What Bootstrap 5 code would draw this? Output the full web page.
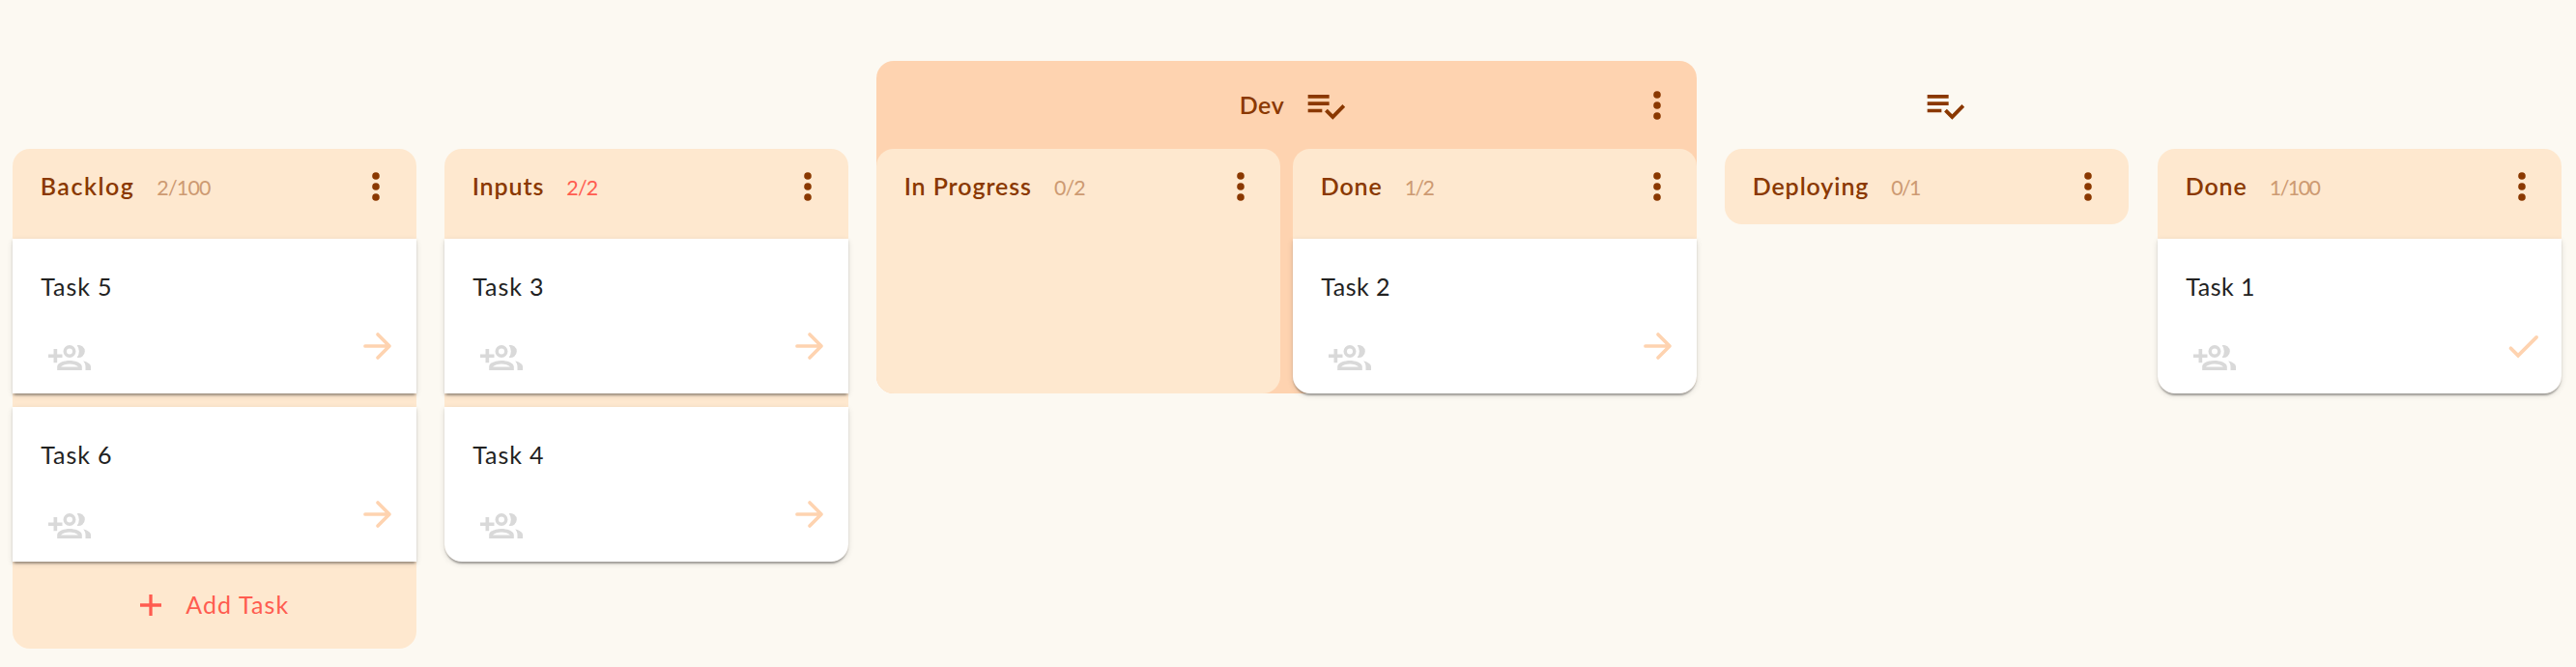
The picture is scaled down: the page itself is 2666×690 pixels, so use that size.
<!DOCTYPE html>
<html lang="en">
<head>
<meta charset="utf-8">
<meta name="viewport" content="width=device-width, initial-scale=1">
<title>Board</title>
<link href="https://cdn.jsdelivr.net/npm/bootstrap@5.3.0/dist/css/bootstrap.min.css" rel="stylesheet">
<style>
body{background:#fcf9f2;font-family:Lato,sans-serif;color:#222;height:690px;overflow:hidden}
svg{display:block;flex:none}
.board{padding:63px 0 0 13px;gap:29px}
.lane{width:418px;flex:none}
.lane-last{margin-left:1px}
.stage-head{height:91px;color:#8a3800;font-size:25px;line-height:30px;font-weight:600;letter-spacing:.6px;gap:21px}
.stage-head.titled{padding-left:14px}
.stage-head.untitled{padding-left:37px}
.stage-head>span,.pane-head>div{margin-top:-1px}
.stage-menu{right:19px;top:24px}
.stage-body{gap:13px}
.stage-dev{width:849px;flex:none;background:#fed3b0;border-radius:18px}
.pane{background:#fee8cf;border-radius:18px}
.pane-head{height:78px;padding:0 20px 0 28.700px;color:#8a3800}
.pane-title{font-size:25px;line-height:30px;font-weight:600;letter-spacing:.9px}
.stage-dev .pane-head,.lane-last .pane-head{padding-right:19px}
.wip{font-size:21.400px;line-height:30px;color:#cd9a72;margin-left:23px;letter-spacing:-.8px}
.wip.over{color:#ff5c50}
.spread{letter-spacing:1.500px}
.tight{letter-spacing:-1.700px}
.tight-2{letter-spacing:-1.500px}
.tasks{padding-top:15px;gap:14px}
.task{height:160px;background:#fff;padding:29px 18.500px 0 29.300px;box-shadow:0 4px 2px -2px rgba(0,0,0,.2),0 2px 2px rgba(0,0,0,.14),0 2px 6px rgba(0,0,0,.12)}
.task-name{font-size:25px;line-height:40px;letter-spacing:.9px}
.task-name.snug{letter-spacing:.5px}
.task-foot{height:47px;margin-top:19.800px;padding-left:7.700px}
.rounded-end .task:last-child{border-radius:0 0 18px 18px}
.add-task{height:90px;color:#ff5c50;font-size:25px;letter-spacing:1.100px;gap:25.500px}
</style>
</head>
<body>
<svg width="0" height="0" class="position-absolute" aria-hidden="true">
  <symbol id="kebab" viewBox="0 0 44 44"><g fill="#8a3800"><circle cx="22" cy="11" r="3.8"/><circle cx="22" cy="22" r="3.8"/><circle cx="22" cy="33" r="3.8"/></g></symbol>
  <symbol id="checklist" viewBox="0 0 24 24"><path fill="#8a3800" d="M14 10H2v2h12v-2zm0-4H2v2h12V6zM2 16h8v-2H2v2zm19.500-4.500L23 13l-6.990 7-4.510-4.500L13 14l3.010 3 5.490-5.500z"/></symbol>
  <symbol id="arrow" viewBox="0 0 44 44"><path d="M9 22H33M22 10L34 22L22 34" fill="none" stroke="#fed3b0" stroke-width="3.700" stroke-linecap="round" stroke-linejoin="round"/></symbol>
  <symbol id="tick" viewBox="0 0 44 44"><path d="M9.500 24.300L17.100 31.900L36.100 12.900" fill="none" stroke="#fed3b0" stroke-width="3.700" stroke-linecap="round"/></symbol>
  <symbol id="people" viewBox="0 0 44 26"><g fill="#d9d9d9"><path d="M5.500 4h3.700v5.400h5.300v3.600H9.200v5.300H5.500V13H0V9.400h5.500z"/><path fill-rule="evenodd" d="M22 0a6.500 6.500 0 1 0 0 13a6.500 6.500 0 0 0 0-13zm0 3.500a3 3 0 1 1 0 6a3 3 0 0 1 0-6z"/><path fill-rule="evenodd" d="M9.200 26v-3.800C9.200 18 17 16 22 16s12.800 2 12.800 6.200V26zM13 22.400h18C29.300 20.700 25.300 19.600 22 19.600s-7.300 1.100-9 2.800z"/><path d="M29.700 .2a6.500 6.500 0 1 1 0 12.600a10.400 10.400 0 0 0 0-12.600z"/><path d="M36 16.500c4.200 .8 8 3 8 5.900V26h-5.500v-3.700c0-2.500-1-4.500-2.500-5.800z"/></g></symbol>
</svg>

<main class="board d-flex align-items-start">

  <section class="lane">
    <div class="stage-head"></div>
    <div class="pane">
      <header class="pane-head d-flex align-items-center">
        <div class="d-flex align-items-baseline me-auto"><span class="pane-title spread">Backlog</span><span class="wip">2/100</span></div>
        <svg width="44" height="44"><use href="#kebab"/></svg>
      </header>
      <div class="tasks d-flex flex-column">
        <article class="task"><div class="task-name">Task 5</div><div class="task-foot d-flex justify-content-between"><svg class="align-self-end" width="44" height="26"><use href="#people"/></svg><svg width="44" height="44"><use href="#arrow"/></svg></div></article>
        <article class="task"><div class="task-name">Task 6</div><div class="task-foot d-flex justify-content-between"><svg class="align-self-end" width="44" height="26"><use href="#people"/></svg><svg width="44" height="44"><use href="#arrow"/></svg></div></article>
      </div>
      <div class="add-task d-flex align-items-center justify-content-center">
        <svg width="22" height="22" viewBox="0 0 22 22"><path d="M11 0V22M0 11H22" stroke="#ff5c50" stroke-width="3.300"/></svg><span>Add Task</span>
      </div>
    </div>
  </section>

  <section class="lane">
    <div class="stage-head"></div>
    <div class="pane">
      <header class="pane-head d-flex align-items-center">
        <div class="d-flex align-items-baseline me-auto"><span class="pane-title">Inputs</span><span class="wip over">2/2</span></div>
        <svg width="44" height="44"><use href="#kebab"/></svg>
      </header>
      <div class="tasks rounded-end d-flex flex-column">
        <article class="task"><div class="task-name">Task 3</div><div class="task-foot d-flex justify-content-between"><svg class="align-self-end" width="44" height="26"><use href="#people"/></svg><svg width="44" height="44"><use href="#arrow"/></svg></div></article>
        <article class="task"><div class="task-name">Task 4</div><div class="task-foot d-flex justify-content-between"><svg class="align-self-end" width="44" height="26"><use href="#people"/></svg><svg width="44" height="44"><use href="#arrow"/></svg></div></article>
      </div>
    </div>
  </section>

  <section class="stage-dev">
    <div class="stage-head titled position-relative d-flex align-items-center justify-content-center">
      <span>Dev</span><svg width="44" height="44"><use href="#checklist"/></svg>
      <svg class="stage-menu position-absolute" width="44" height="44"><use href="#kebab"/></svg>
    </div>
    <div class="stage-body d-flex align-items-stretch">
      <div class="pane lane">
        <header class="pane-head d-flex align-items-center">
          <div class="d-flex align-items-baseline me-auto"><span class="pane-title">In Progress</span><span class="wip">0/2</span></div>
          <svg width="44" height="44"><use href="#kebab"/></svg>
        </header>
      </div>
      <div class="pane lane">
        <header class="pane-head d-flex align-items-center">
          <div class="d-flex align-items-baseline me-auto"><span class="pane-title">Done</span><span class="wip tight">1/2</span></div>
          <svg width="44" height="44"><use href="#kebab"/></svg>
        </header>
        <div class="tasks rounded-end d-flex flex-column">
          <article class="task"><div class="task-name snug">Task 2</div><div class="task-foot d-flex justify-content-between"><svg class="align-self-end" width="44" height="26"><use href="#people"/></svg><svg width="44" height="44"><use href="#arrow"/></svg></div></article>
        </div>
      </div>
    </div>
  </section>

  <section class="lane">
    <div class="stage-head untitled d-flex align-items-center justify-content-center"><svg width="44" height="44"><use href="#checklist"/></svg></div>
    <div class="pane">
      <header class="pane-head d-flex align-items-center">
        <div class="d-flex align-items-baseline me-auto"><span class="pane-title">Deploying</span><span class="wip tight">0/1</span></div>
        <svg width="44" height="44"><use href="#kebab"/></svg>
      </header>
    </div>
  </section>

  <section class="lane lane-last">
    <div class="stage-head"></div>
    <div class="pane">
      <header class="pane-head d-flex align-items-center">
        <div class="d-flex align-items-baseline me-auto"><span class="pane-title">Done</span><span class="wip tight-2">1/100</span></div>
        <svg width="44" height="44"><use href="#kebab"/></svg>
      </header>
      <div class="tasks rounded-end d-flex flex-column">
        <article class="task"><div class="task-name snug">Task 1</div><div class="task-foot d-flex justify-content-between"><svg class="align-self-end" width="44" height="26"><use href="#people"/></svg><svg width="44" height="44"><use href="#tick"/></svg></div></article>
      </div>
    </div>
  </section>

</main>
<script src="https://cdn.jsdelivr.net/npm/bootstrap@5.3.0/dist/js/bootstrap.bundle.min.js"></script>
</body>
</html>
